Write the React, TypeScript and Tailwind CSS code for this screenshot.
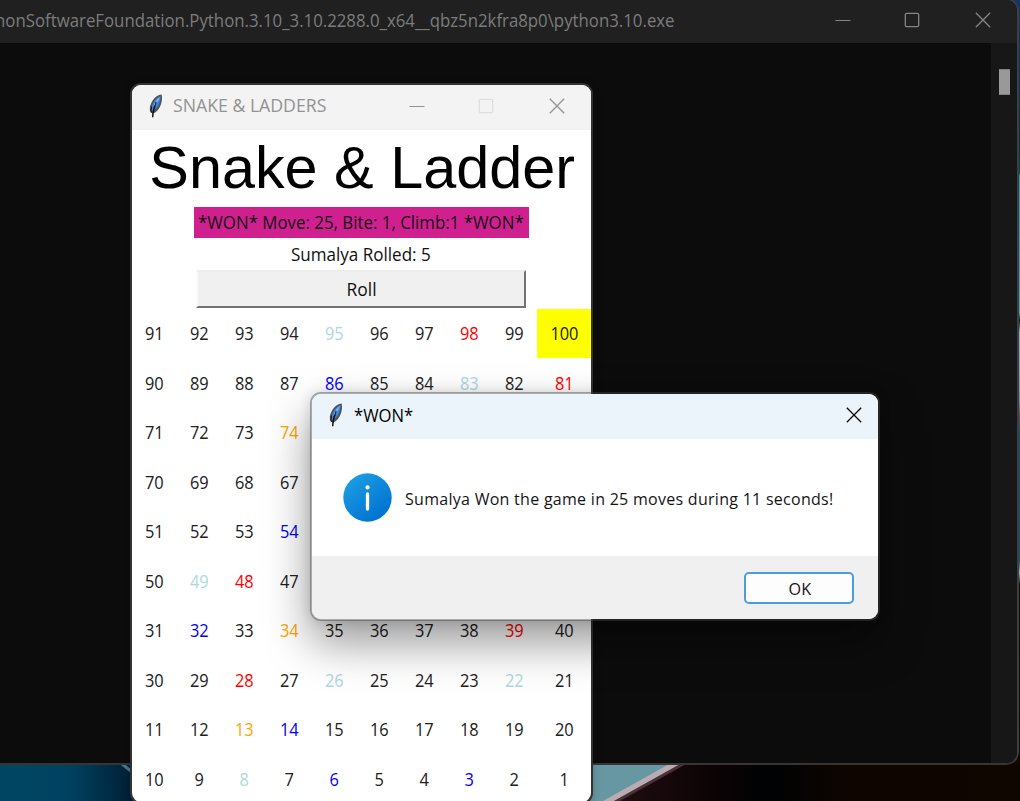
import type { ReactNode } from "react";

type Cell = number;

const rows: Cell[][] = Array.from({ length: 10 }, (_, r) => {
  const top = 100 - r * 10;
  const ascending = Array.from({ length: 10 }, (_, i) => top - 9 + i);
  return r % 2 === 0 ? ascending : ascending.reverse();
});

const colors: Record<number, string> = {
  95: "text-[#add8e6]", 83: "text-[#add8e6]", 49: "text-[#add8e6]", 26: "text-[#add8e6]", 22: "text-[#add8e6]", 8: "text-[#add8e6]",
  98: "text-[#ff0000]", 81: "text-[#ff0000]", 48: "text-[#ff0000]", 39: "text-[#ff0000]", 28: "text-[#ff0000]",
  86: "text-[#0000ff]", 54: "text-[#0000ff]", 32: "text-[#0000ff]", 14: "text-[#0000ff]", 6: "text-[#0000ff]", 3: "text-[#0000ff]",
  74: "text-[#ffa500]", 34: "text-[#ffa500]", 13: "text-[#ffa500]",
};

function Feather() {
  return (
    <svg className="h-6 w-4 shrink-0" viewBox="0 0 16 24">
      <path d="M13.600.600C9.500.900 5.600 4.300 3.200 9.200c-1.600 3.100-1.900 6.500-.6 9.200l2.300 1.200c4-1.500 6.800-5 8.100-9.400 1-3.400 1.500-6.300.6-9.600Z" fill="#50555d" />
      <path d="M12.500 2C8.900 3.400 6 6.900 4.500 10.700c-1 2.600-1.200 4.600-.4 6.400 3.300-1.400 5.900-4.400 7.200-8.100.8-2.400 1.300-4.700 1.200-7Z" fill="#3f85dc" />
      <path d="M11.800 2.900C8.700 5 7 8 5.700 11.300l1.600-1.200L10.200 7l1.600-4.100Z" fill="#84b8f0" />
      <path d="M3.600 12.500l-.8 4.900 1.600 1.200M8 7.800l-.5 3-1.500 2.800" fill="none" stroke="#10151d" strokeWidth="1" />
      <path d="M7 12C5.600 15 5 18 4.700 23.200" fill="none" stroke="#08090b" strokeWidth="1.400" />
    </svg>
  );
}

function Minimize() {
  return <svg className="size-4" viewBox="0 0 16 16"><path d="M0.500 8.500h15" stroke="currentColor" /></svg>;
}

function Maximize() {
  return <svg className="size-4" viewBox="0 0 16 16"><rect x="1.300" y="1.300" width="13.400" height="13.400" rx="1.500" fill="none" stroke="currentColor" strokeWidth="1.300" /></svg>;
}

function Close() {
  return <svg className="size-4" viewBox="0 0 16 16"><path d="M.8.800l14.400 14.400M15.200.800L.8 15.200" stroke="currentColor" strokeWidth="1.300" /></svg>;
}

function Label({ className, children }: { className: string; children: ReactNode }) {
  return <span className={`inline-block whitespace-nowrap leading-none ${className}`}>{children}</span>;
}

function Wallpaper() {
  return (
    <svg className="absolute inset-0 h-[801px] w-[1020px]" viewBox="0 0 1020 801" preserveAspectRatio="none">
      <defs>
        <linearGradient id="sea" x1="0" x2="1"><stop stopColor="#004764" /><stop offset=".5" stopColor="#004160" /><stop offset=".8" stopColor="#002a42" /><stop offset="1" stopColor="#001a30" /></linearGradient>
        <linearGradient id="edge" x1="0" x2="0" y1="0" y2="1">
          <stop stopColor="#173463" /><stop offset=".18" stopColor="#102642" /><stop offset=".215" stopColor="#123c4c" /><stop offset=".22" stopColor="#3298ad" /><stop offset=".39" stopColor="#5a9db0" />
          <stop offset=".4" stopColor="#11191f" /><stop offset=".415" stopColor="#8faebd" /><stop offset=".5" stopColor="#7192a5" /><stop offset=".52" stopColor="#6a414d" /><stop offset=".54" stopColor="#174d70" />
          <stop offset=".7" stopColor="#175374" /><stop offset=".715" stopColor="#a0aab4" /><stop offset=".73" stopColor="#160904" /><stop offset="1" stopColor="#100600" />
        </linearGradient>
        <linearGradient id="dusk" x1="0" x2="1"><stop stopColor="#260f14" /><stop offset=".28" stopColor="#0c0305" /><stop offset=".42" stopColor="#000203" /><stop offset=".6" stopColor="#0e0501" /><stop offset="1" stopColor="#100600" /></linearGradient>
      </defs>
      <rect width="1020" height="801" fill="url(#edge)" />
      <rect y="760" width="140" height="41" fill="url(#sea)" />
      <path d="M117 760l24 19" stroke="#487991" strokeWidth="3" />
      <rect x="590" y="764" width="430" height="37" fill="url(#dusk)" />
      <path d="M590 760h90l-72 41h-18Z" fill="#6797a2" />
      <path d="M679 762L602 805" stroke="#b8abb2" strokeWidth="6" />
      <path d="M685 763L608 806" stroke="#493039" strokeWidth="3" />
    </svg>
  );
}

function Console() {
  return (
    <section className="absolute -left-3 top-[-2px] flex h-[767px] w-[1031px] flex-col overflow-hidden rounded-[13px] border-2 border-[#3b4045] border-b-[#373533] bg-[#0c0c0c]">
      <header className="flex h-[43px] shrink-0 items-center bg-[#202020] pb-[3px] text-[#858585]">
        <div className="flex w-[685px] shrink-0 justify-end">
          <Label className="origin-right scale-x-[0.933] text-[18px] text-[#7c7c7c]">C:\Program Files\WindowsApps\PythonSoftwareFoundation.Python.3.10_3.10.2288.0_x64__qbz5n2kfra8p0\python3.10.exe</Label>
        </div>
        <div className="ml-[160px] flex gap-[53px] [&>svg:last-child]:ml-0.5"><Minimize /><Maximize /><Close /></div>
      </header>
      <div className="flex flex-1 justify-end">
        <div className="w-[26px] bg-[#171717] pl-2 pt-[26px]"><div className="h-[26px] w-[11px] border-y border-[#828282] bg-[#999999]" /></div>
      </div>
    </section>
  );
}

function Game() {
  return (
    <section className="absolute left-[130px] top-[83px] flex h-[721px] w-[463px] flex-col overflow-hidden rounded-[11px] border-2 border-[#333333] bg-white shadow-[0_2px_8px_rgba(0,0,0,0.2)]">
      <header className="flex h-[45px] shrink-0 items-center bg-[#f3f3f3] pb-[3px] pl-4 text-[#929292]">
        <Feather />
        <div className="ml-[9px] w-[236px]"><Label className="origin-left scale-x-[0.982] text-[18px]">SNAKE &amp; LADDERS</Label></div>
        <Minimize />
        <span className="ml-[53px] text-[#dedede]"><Maximize /></span>
        <span className="ml-[55px]"><Close /></span>
      </header>
      <div className="flex h-[178.500px] shrink-0 flex-col items-center pr-px text-[18px] text-[#111111]">
        <h1 className="h-[77px] scale-x-[0.989] whitespace-nowrap pl-[2px] pt-[4px] font-['Liberation_Sans',sans-serif] text-[60px] leading-[67px] text-black">Snake &amp; Ladder</h1>
        <div className="flex h-[31px] w-[335px] items-center justify-center bg-[#d02090] pb-px"><Label className="scale-x-[0.937]">*WON* Move: 25, Bite: 1, Climb:1 *WON*</Label></div>
        <div className="flex h-[32px] items-center"><Label className="scale-x-[0.947]">Sumalya Rolled: 5</Label></div>
        <button className="flex h-[38px] w-[330px] items-center justify-center border-2 border-b-[#737373] border-l-[#fafafa] border-r-[#737373] border-t-[#ededed] bg-[#f0f0f0] pb-px pl-px"><Label className="scale-x-[0.97]">Roll</Label></button>
      </div>
      <div className="grid shrink-0 grid-cols-[repeat(9,45px)_54px] auto-rows-[49.520px] text-[18px]">
        {rows.flat().map((n) => (
          <div key={n} className={`flex items-center justify-center ${n === 100 ? "bg-[#ffff00]" : ""} ${colors[n] ?? "text-[#202020]"}`}><Label className="scale-x-[0.91]">{n}</Label></div>
        ))}
      </div>
    </section>
  );
}

function WonDialog() {
  return (
    <section className="absolute left-[310px] top-[392px] flex h-[229px] w-[570px] flex-col overflow-hidden rounded-[11px] border-2 border-[#444444]/45 bg-white bg-clip-padding shadow-[0_22px_45px_rgba(0,0,0,0.4),0_0_12px_rgba(0,0,0,0.12)]">
      <header className="flex h-[45px] shrink-0 items-center bg-[#ebf4fa] pb-[3px] pl-4 pr-[16px] text-black">
        <Feather />
        <Label className="ml-[10px] origin-left scale-x-[0.925] text-[18px]">*WON*</Label>
        <span className="ml-auto"><Close /></span>
      </header>
      <div className="flex h-[117px] shrink-0 items-center pl-[31px]">
        <svg className="h-[49px] w-[49px]" viewBox="0 0 49 49">
          <defs><linearGradient id="info" x1=".15" y1=".1" x2=".8" y2=".95"><stop stopColor="#1b9de2" /><stop offset="1" stopColor="#0070d0" /></linearGradient></defs>
          <circle cx="24.500" cy="24.500" r="24.200" fill="url(#info)" /><circle cx="24.500" cy="14.400" r="2.100" fill="#fff" /><path d="M24.500 21v15" stroke="#fff" strokeWidth="3.300" strokeLinecap="round" />
        </svg>
        <Label className="ml-[13px] pt-[3px] text-[16px] tracking-[0.280px] text-[#151515]">Sumalya Won the game in 25 moves during 11 seconds!</Label>
      </div>
      <footer className="flex flex-1 items-center justify-end bg-[#f0f0f0] pr-6 pt-px">
        <button className="flex h-8 w-[110px] items-center justify-center rounded-[5px] border-2 border-[#4a9edb] bg-[#fdfdfd] pl-px text-[17px] text-[#151515]"><Label className="scale-x-[0.95]">OK</Label></button>
      </footer>
    </section>
  );
}

export default function App() {
  return (
    <main className="relative h-[801px] w-[1020px] overflow-hidden bg-[#0c0c0c] font-['Open_Sans','Noto_Sans',sans-serif]">
      <Wallpaper />
      <Console />
      <Game />
      <WonDialog />
    </main>
  );
}
